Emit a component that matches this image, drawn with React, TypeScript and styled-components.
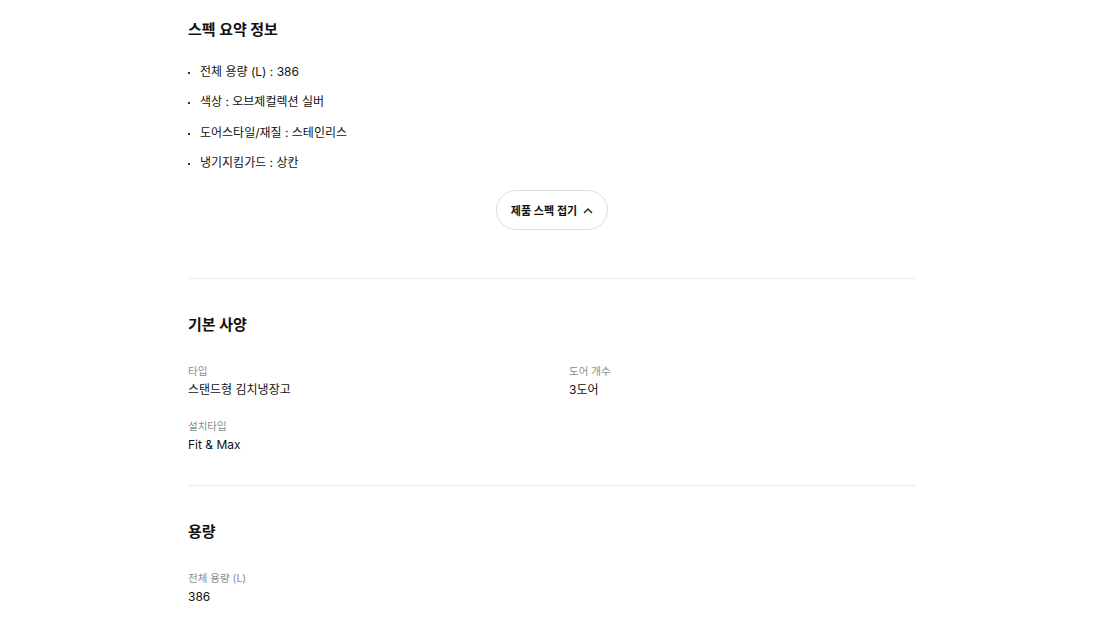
import React from "react";
import styled, { createGlobalStyle } from "styled-components";

const Global = createGlobalStyle`
  html, body { margin: 0; padding: 0; background: #fff; }
  body { font-family: "Inter", "Noto Sans CJK KR", sans-serif; color: #111; }
  * { box-sizing: border-box; }
`;

const Page = styled.div`
  width: 728px;
  margin-left: 188px;
  padding-top: 18px;
`;

const Section = styled.section<{ $first?: boolean; $last?: boolean }>`
  padding-top: ${(p) => (p.$first ? "0" : "34px")};
  padding-bottom: ${(p) => (p.$first ? "48px" : p.$last ? "20px" : "31px")};
  border-bottom: ${(p) => (p.$last ? "none" : "1px solid #ebebeb")};
`;

const Title = styled.h2`
  margin: 0;
  font-size: 15px;
  line-height: 24px;
  font-weight: 700;
  color: #111;
`;

const BulletList = styled.ul`
  list-style: none;
  margin: 20px 0 0;
  padding: 0;
  display: flex;
  flex-direction: column;
  gap: 10.4px;
`;

const Bullet = styled.li`
  position: relative;
  padding-left: 12px;
  font-size: 12px;
  line-height: 20px;
  color: #111;
  &::before {
    content: "";
    position: absolute;
    left: 0;
    top: 10px;
    width: 2px;
    height: 2px;
    background: #333;
  }
`;

const ButtonRow = styled.div`
  display: flex;
  justify-content: center;
  margin-top: 17px;
`;

const FoldButton = styled.button`
  display: inline-flex;
  align-items: center;
  gap: 6px;
  height: 40px;
  padding: 0 14px 0 14px;
  border: 1px solid #dcdcdc;
  border-radius: 20px;
  background: #fff;
  font-family: inherit;
  font-size: 11px;
  font-weight: 600;
  color: #111;
  cursor: pointer;
`;

const SpecGrid = styled.div`
  display: grid;
  grid-template-columns: 381px 1fr;
  row-gap: 18.5px;
  margin-top: 26px;
`;

const SpecItem = styled.div`
  display: flex;
  flex-direction: column;
`;

const Label = styled.span`
  font-size: 10.5px;
  line-height: 17px;
  color: #8c8c8c;
`;

const Value = styled.span`
  font-size: 12px;
  line-height: 19px;
  color: #111;
`;

const Chevron = () => (
  <svg width="10" height="7" viewBox="0 0 10 7" fill="none">
    <polyline points="1,6 5,2 9,6" stroke="#222" strokeWidth="1.4" />
  </svg>
);

const summary = [
  "전체 용량 (L) : 386",
  "색상 : 오브제컬렉션 실버",
  "도어스타일/재질 : 스테인리스",
  "냉기지킴가드 : 상칸",
];

export default function App() {
  return (
    <>
      <Global />
      <Page>
        <Section $first>
          <Title>스펙 요약 정보</Title>
          <BulletList>
            {summary.map((s) => (
              <Bullet key={s}>{s}</Bullet>
            ))}
          </BulletList>
          <ButtonRow>
            <FoldButton>
              제품 스펙 접기 <Chevron />
            </FoldButton>
          </ButtonRow>
        </Section>
        <Section>
          <Title>기본 사양</Title>
          <SpecGrid>
            <SpecItem>
              <Label>타입</Label>
              <Value>스탠드형 김치냉장고</Value>
            </SpecItem>
            <SpecItem>
              <Label>도어 개수</Label>
              <Value>3도어</Value>
            </SpecItem>
            <SpecItem>
              <Label>설치타입</Label>
              <Value>Fit &amp; Max</Value>
            </SpecItem>
          </SpecGrid>
        </Section>
        <Section $last>
          <Title>용량</Title>
          <SpecGrid>
            <SpecItem>
              <Label>전체 용량 (L)</Label>
              <Value>386</Value>
            </SpecItem>
          </SpecGrid>
        </Section>
      </Page>
    </>
  );
}
